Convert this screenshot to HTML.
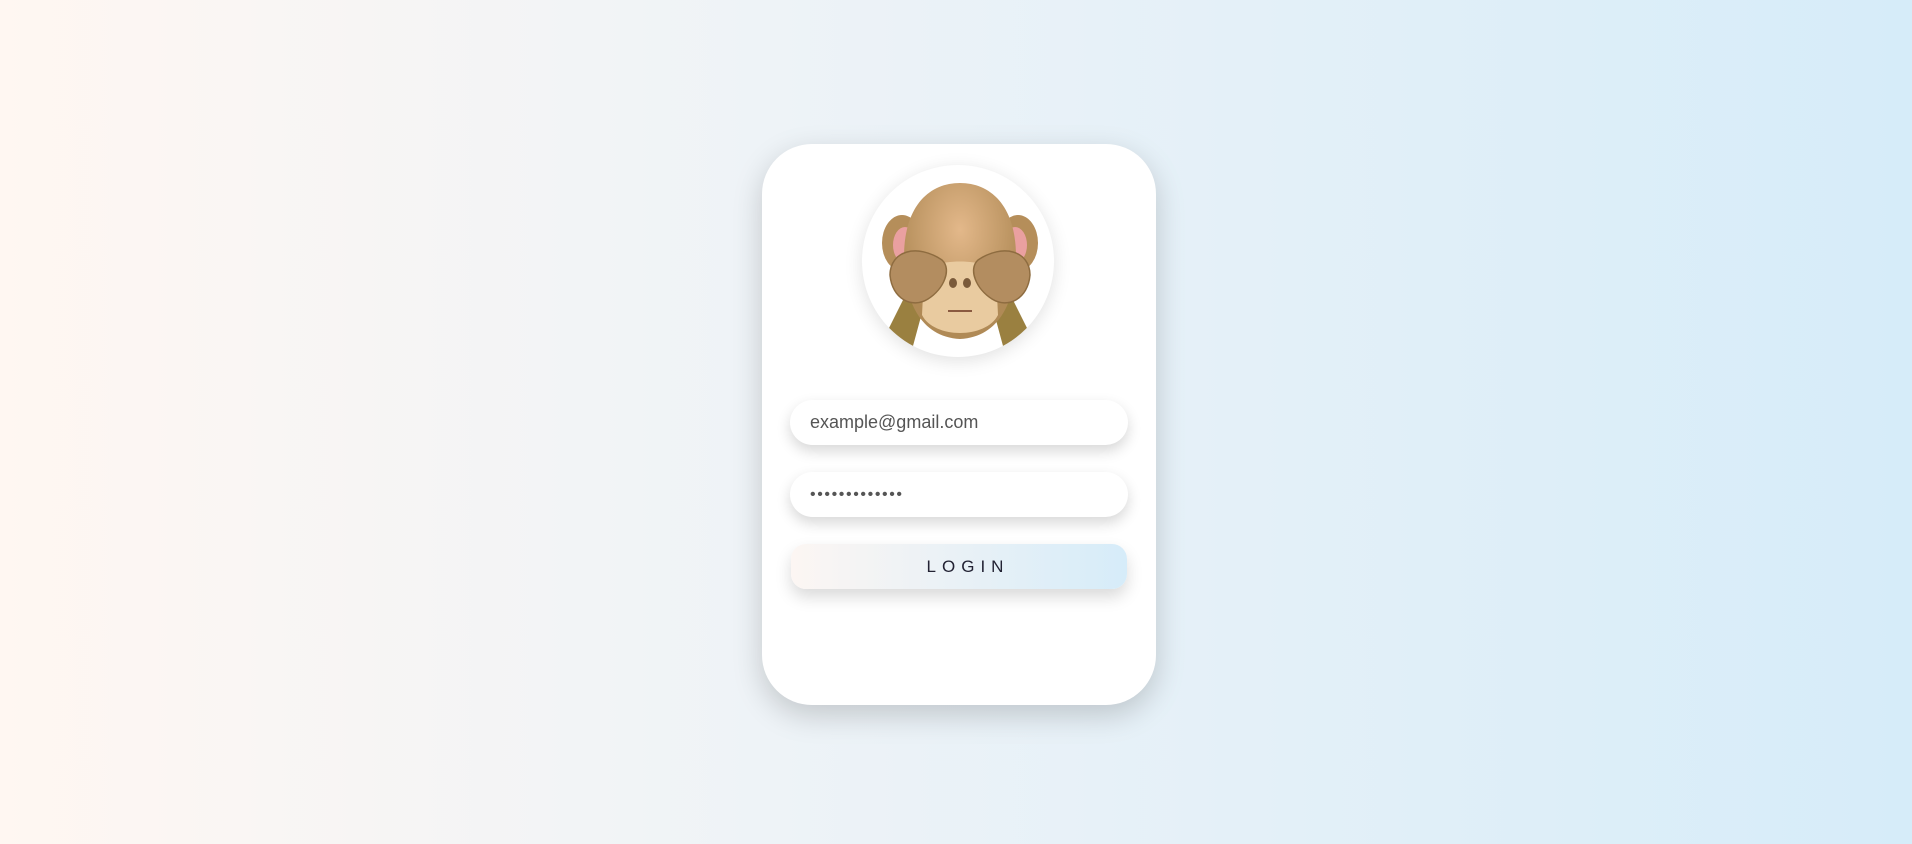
<!DOCTYPE html>
<html><head><meta charset="utf-8"><style>
html,body{margin:0;padding:0;width:1912px;height:844px;overflow:hidden}
body{background:linear-gradient(90deg,#fff7f2 0%,#eef3f7 40%,#d6ecf9 100%);font-family:"Liberation Sans",sans-serif;position:relative}
.card{position:absolute;left:762px;top:144px;width:394px;height:561px;background:#fff;border-radius:50px;box-shadow:0 10px 30px rgba(0,0,0,.18)}
.av{position:absolute;left:862px;top:165px;width:192px;height:192px;border-radius:50%;background:#fff;box-shadow:0 4px 18px rgba(0,0,0,.12);overflow:hidden}
.inp{position:absolute;left:790px;width:338px;height:45px;border-radius:23px;background:#fff;box-shadow:0 6px 14px rgba(0,0,0,.16);box-sizing:border-box;padding-left:20px;line-height:45px;font-size:18px;color:#555}
.btn{position:absolute;left:791px;top:544px;width:336px;height:45px;border-radius:15px;background:linear-gradient(90deg,#fcf6f3,#d6ecf9);box-shadow:0 8px 16px rgba(0,0,0,.15);text-align:center;line-height:45px;font-size:17px;letter-spacing:6px;text-indent:18px;color:#223}
</style></head><body>
<div class="card"></div>
<div class="av"><svg width="192" height="192" viewBox="0 0 192 192">
<defs><radialGradient id="h" cx="50%" cy="30%" r="60%"><stop offset="0" stop-color="#e3b88a"/><stop offset="1" stop-color="#b08a56"/></radialGradient></defs>
<path d="M26 165 L46 125 L64 133 L48 192 L22 192Z" fill="#9a8040"/>
<path d="M166 165 L146 125 L128 133 L144 192 L170 192Z" fill="#9a8040"/>
<ellipse cx="40" cy="78" rx="20" ry="28" fill="#b58e5a"/><ellipse cx="43" cy="80" rx="12" ry="18" fill="#eaa0a0"/>
<ellipse cx="156" cy="78" rx="20" ry="28" fill="#b58e5a"/><ellipse cx="153" cy="80" rx="12" ry="18" fill="#eaa0a0"/>
<path d="M42 92 C42 40 68 18 98 18 C128 18 154 40 154 92 C154 135 138 172 98 174 C58 172 42 135 42 92Z" fill="url(#h)"/>
<path d="M62 110 C62 92 134 92 134 110 L136 150 C124 174 72 174 60 150Z" fill="#e9cba0"/>
<ellipse cx="91" cy="118" rx="4" ry="5" fill="#7a5a3a"/><ellipse cx="105" cy="118" rx="4" ry="5" fill="#7a5a3a"/>
<path d="M86 146 L110 146" stroke="#8a5a40" stroke-width="2"/>
<path d="M28 110 C28 86 55 78 80 95 C90 104 82 124 66 134 C50 144 30 134 28 110Z" fill="#b38d60" stroke="#8e6c40" stroke-width="1.5"/>
<path d="M168 110 C168 86 141 78 116 95 C106 104 114 124 130 134 C146 144 166 134 168 110Z" fill="#b38d60" stroke="#8e6c40" stroke-width="1.5"/>
</svg></div>
<div class="inp" style="top:400px">example@gmail.com</div>
<div class="inp" style="top:472px;font-size:16px;letter-spacing:1.6px">•••••••••••••</div>
<div class="btn">LOGIN</div>
</body></html>
